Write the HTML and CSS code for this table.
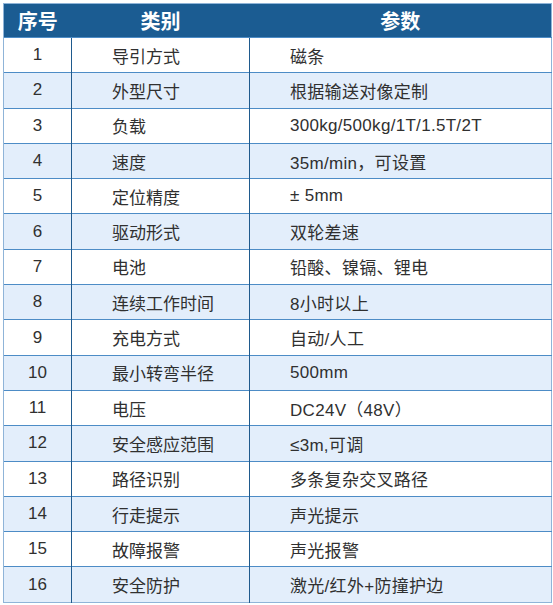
FILE: index.html
```html
<!DOCTYPE html>
<html lang="zh">
<head>
<meta charset="utf-8">
<title>参数表</title>
<link rel="stylesheet" href="styles.css">
</head>
<body>
<table class="spec">
  <colgroup><col class="c1"><col class="c2"><col class="c3"></colgroup>
  <thead>
    <tr><th>序号</th><th>类别</th><th>参数</th></tr>
  </thead>
  <tbody>
    <tr><td class="num">1</td><td class="cat">导引方式</td><td class="val">磁条</td></tr>
    <tr><td class="num">2</td><td class="cat">外型尺寸</td><td class="val">根据输送对像定制</td></tr>
    <tr><td class="num">3</td><td class="cat">负载</td><td class="val">300kg/500kg/1T/1.5T/2T</td></tr>
    <tr><td class="num">4</td><td class="cat">速度</td><td class="val">35m/min，可设置</td></tr>
    <tr><td class="num">5</td><td class="cat">定位精度</td><td class="val">± 5mm</td></tr>
    <tr><td class="num">6</td><td class="cat">驱动形式</td><td class="val">双轮差速</td></tr>
    <tr><td class="num">7</td><td class="cat">电池</td><td class="val">铅酸、镍镉、锂电</td></tr>
    <tr><td class="num">8</td><td class="cat">连续工作时间</td><td class="val">8小时以上</td></tr>
    <tr><td class="num">9</td><td class="cat">充电方式</td><td class="val">自动/人工</td></tr>
    <tr><td class="num">10</td><td class="cat">最小转弯半径</td><td class="val">500mm</td></tr>
    <tr><td class="num">11</td><td class="cat">电压</td><td class="val">DC24V（48V）</td></tr>
    <tr><td class="num">12</td><td class="cat">安全感应范围</td><td class="val">≤3m,可调</td></tr>
    <tr><td class="num">13</td><td class="cat">路径识别</td><td class="val">多条复杂交叉路径</td></tr>
    <tr><td class="num">14</td><td class="cat">行走提示</td><td class="val">声光提示</td></tr>
    <tr><td class="num">15</td><td class="cat">故障报警</td><td class="val">声光报警</td></tr>
    <tr><td class="num">16</td><td class="cat">安全防护</td><td class="val">激光/红外+防撞护边</td></tr>
  </tbody>
</table>
</body>
</html>
```
FILE: styles.css
```css
html, body {
  margin: 0;
  padding: 0;
  background: #ffffff;
}
body {
  padding: 3px 0 0 3px;
  font-family: "Liberation Sans", "Noto Sans CJK SC", Arial, sans-serif;
  color: #303030;
}
.spec {
  border-collapse: collapse;
  table-layout: fixed;
  width: 548px;
  border: 1px solid #8fb4d8;
}
.c1 { width: 68px; }
.c2 { width: 178px; }
.c3 { width: 302px; }
.spec thead tr {
  height: 34px;
  background: #1b5c92;
}
.spec th {
  color: #ffffff;
  font-family: "Noto Sans CJK SC", sans-serif;
  font-size: 20px;
  font-weight: bold;
  text-align: center;
  padding: 0;
  border: none;
}
.spec tbody tr {
  height: 35.3px;
}
.spec tbody tr:nth-child(even) {
  background: #e3eefb;
}
.spec td {
  padding: 0;
  font-size: 17px;
  border-top: 1px solid #4d8cc6;
  border-left: 1px solid #1f5a8d;
  white-space: nowrap;
}
.spec td:first-child {
  border-left: 1px solid #8fb4d8;
}
.num {
  text-align: center;
}
.cat {
  padding-left: 40px !important;
}
.val {
  padding-left: 40px !important;
  letter-spacing: 0.3px;
}
```
